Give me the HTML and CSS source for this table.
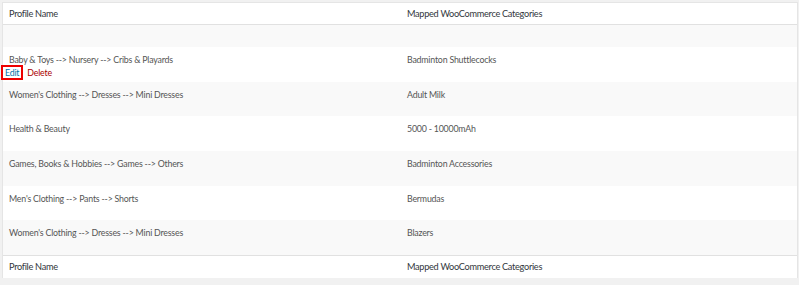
FILE: index.html
```html
<!DOCTYPE html>
<html>
<head>
<meta charset="utf-8">
<link rel="stylesheet" href="styles.css">
</head>
<body>
<div class="wrap">
<table class="list">
  <thead>
    <tr><th class="c1">Profile Name</th><th class="c2">Mapped WooCommerce Categories</th></tr>
  </thead>
  <tbody>
    <tr class="empty alt"><td></td><td></td></tr>
    <tr class="row">
      <td>Baby &amp; Toys --&gt; Nursery --&gt; Cribs &amp; Playards
        <div class="actions"><span class="edit"><a href="#">Edit</a></span><a class="del" href="#">Delete</a></div>
      </td>
      <td>Badminton Shuttlecocks</td>
    </tr>
    <tr class="row alt"><td>Women's Clothing --&gt; Dresses --&gt; Mini Dresses</td><td>Adult Milk</td></tr>
    <tr class="row"><td>Health &amp; Beauty</td><td>5000 - 10000mAh</td></tr>
    <tr class="row alt"><td>Games, Books &amp; Hobbies --&gt; Games --&gt; Others</td><td>Badminton Accessories</td></tr>
    <tr class="row"><td>Men's Clothing --&gt; Pants --&gt; Shorts</td><td>Bermudas</td></tr>
    <tr class="row alt"><td>Women's Clothing --&gt; Dresses --&gt; Mini Dresses</td><td>Blazers</td></tr>
  </tbody>
  <tfoot>
    <tr><th class="c1">Profile Name</th><th class="c2">Mapped WooCommerce Categories</th></tr>
  </tfoot>
</table>
</div>
</body>
</html>
```
FILE: styles.css
```css
html, body { margin: 0; padding: 0; }
body {
  background: #f1f1f1;
  font-family: Lato, "Open Sans", sans-serif;
  color: #555;
}
.wrap { padding: 3px 2px 0 3px; }
.list {
  width: 794px;
  border-collapse: collapse;
  table-layout: fixed;
  background: #fff;
  box-shadow: 0 1px 1px rgba(0,0,0,0.04);
  outline: 1px solid #e5e5e5;
}
.list th {
  font-weight: normal;
  text-align: left;
  font-size: 9.2px;
  letter-spacing: -0.3px;
  color: #32373c;
  height: 21px;
  padding: 0 6px;
  line-height: 21px;
}
.list thead th { border-bottom: 1px solid #e1e1e1; }
.list tfoot th { border-top: 1px solid #e1e1e1; height: 22px; }
.list th.c1 { width: 385px; }
.list td {
  font-size: 8.8px;
  letter-spacing: -0.2px;
  vertical-align: top;
  padding: 0 6px;
}
.list tr.empty td { height: 22px; }
.list tr.row td { height: 34.7px; padding-top: 6px; box-sizing: border-box; line-height: 13px; }
.list tr.alt td { background: #f9f9f9; }
.list td + td, .list th + th { padding-left: 7px; }
.actions { line-height: 13px; margin-left: -4px; }
.actions a { text-decoration: none; }
.edit { position: relative; }
.edit a { color: #0073aa; }
.edit::after {
  content: "";
  position: absolute;
  left: -4px;
  right: -4px;
  top: -2px;
  bottom: -2px;
  border: 2px solid #e00;
}
.del { color: #a00; margin-left: 8px; }
```
